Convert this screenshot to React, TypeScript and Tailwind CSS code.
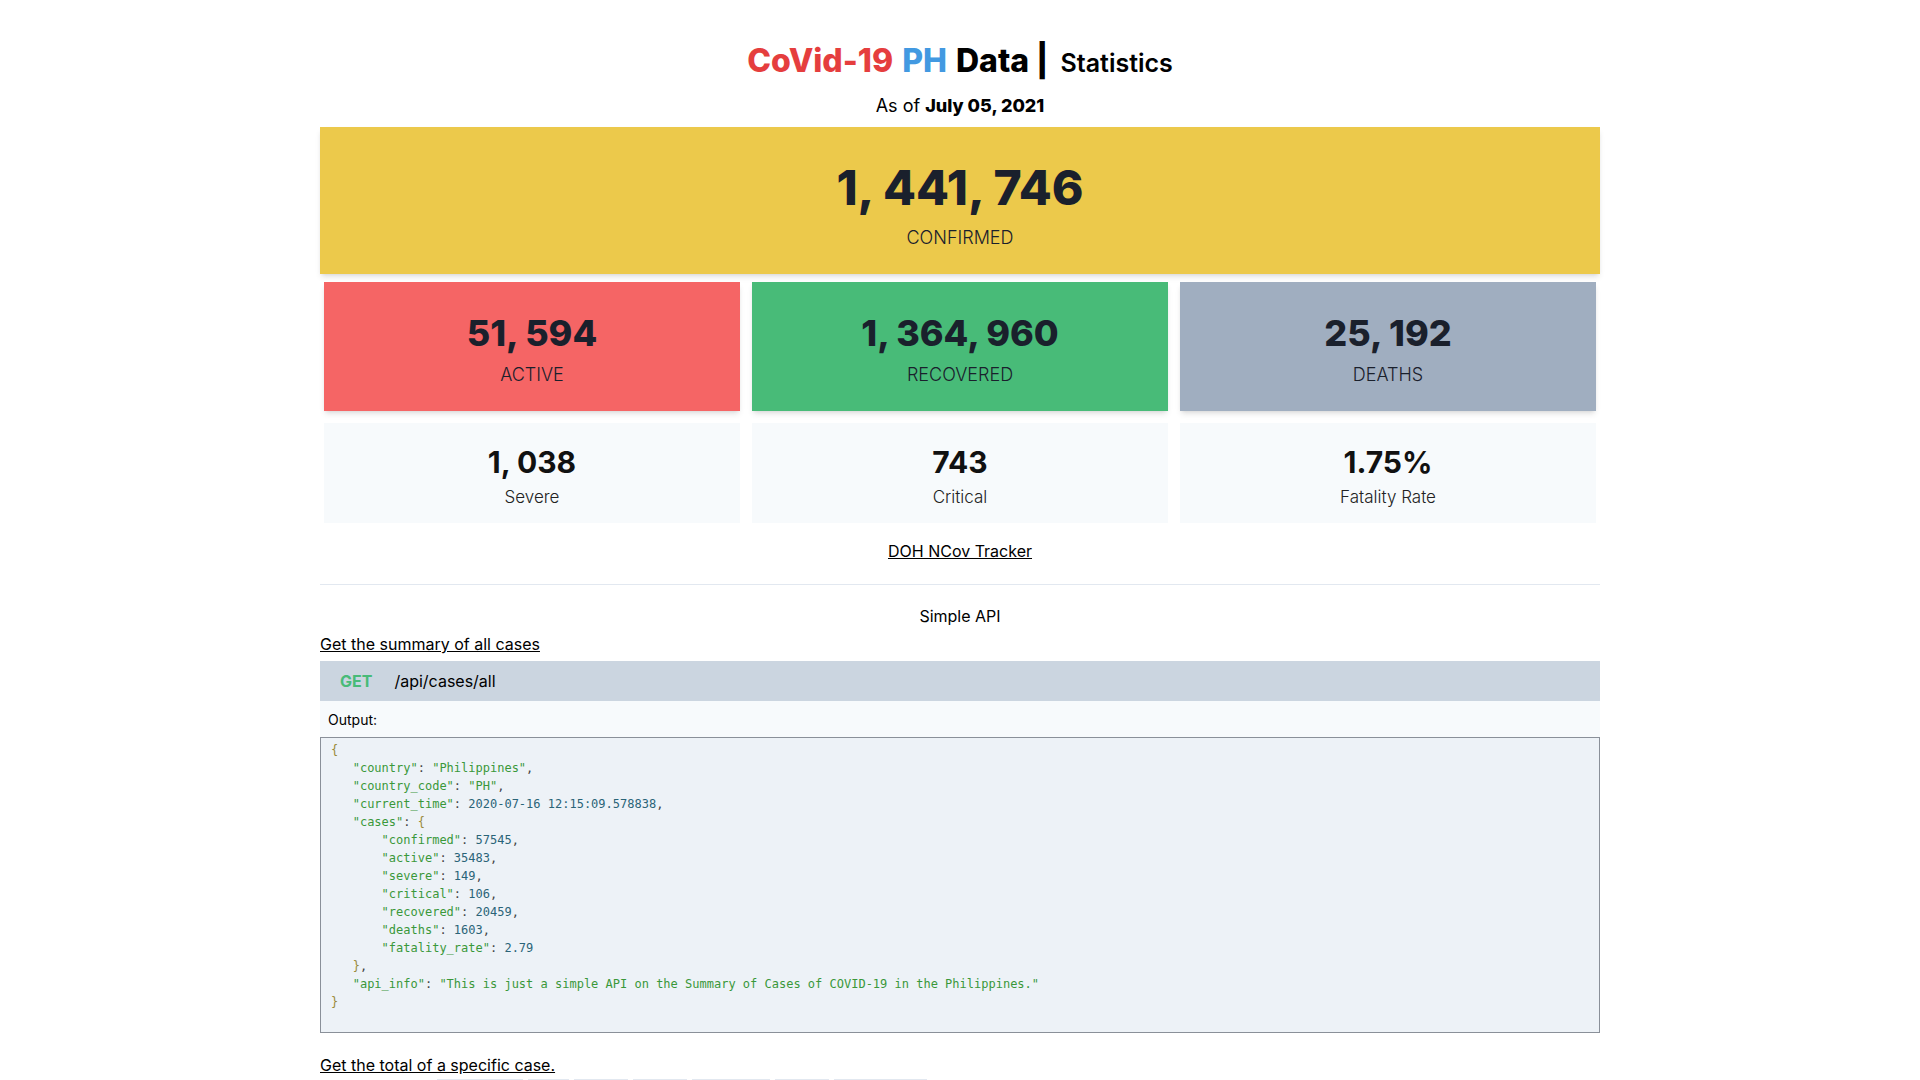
import React from "react";

const K = ({ children }: { children: React.ReactNode }) => (
  <span className="text-[#3a983a]">{children}</span>
);
const N = ({ children }: { children: React.ReactNode }) => (
  <span className="text-[#2a6478]">{children}</span>
);
const B = ({ children }: { children: React.ReactNode }) => (
  <span className="text-[#9a8a3a]">{children}</span>
);
const P = ({ children }: { children: React.ReactNode }) => (
  <span className="text-[#444]">{children}</span>
);

function StatCard({ value, label, bg }: { value: string; label: string; bg: string }) {
  return (
    <div className={`${bg} shadow-md pt-[31px] pb-[22px] text-center text-[#1a202c]`}>
      <div className="text-[36px] leading-[40px] font-extrabold">{value}</div>
      <div className="mt-[8px] text-[18px] leading-[28px] font-light uppercase">{label}</div>
    </div>
  );
}

function SubCard({ value, label }: { value: string; label: string }) {
  return (
    <div className="bg-[#f7fafc] pt-[21px] pb-[12px] text-center text-[#111]">
      <div className="text-[30px] leading-[36px] font-bold">{value}</div>
      <div className="mt-[3px] text-[17px] leading-[28px] font-light text-[#222]">{label}</div>
    </div>
  );
}

export default function App() {
  return (
    <div className="min-h-screen bg-white font-['Inter','Liberation_Sans',sans-serif] text-[#1a202c]">
      <div className="w-[1280px] mx-auto pt-[40px]">
        <h1 className="text-center leading-[42px] flex items-baseline justify-center">
          <span className="text-[32px] font-extrabold text-[#e53e3e]">CoVid-19</span>
          <span className="text-[32px] font-extrabold text-[#4299e1] ml-[9px]">PH</span>
          <span className="text-[32px] font-extrabold text-black ml-[9px]">Data |</span>
          <span className="text-[25px] font-semibold text-black ml-[12px]">Statistics</span>
        </h1>
        <p className="mt-[8px] text-center text-[18px] leading-[28px] text-black">
          As of <span className="font-extrabold">July 05, 2021</span>
        </p>

        <div className="mt-[7px] bg-[#ecc94b] shadow-md pt-[37px] pb-[22px] text-center text-[#1a202c]">
          <div className="text-[48px] leading-[48px] font-extrabold">1, 441, 746</div>
          <div className="mt-[12px] text-[18px] leading-[28px] font-light uppercase">Confirmed</div>
        </div>

        <div className="mt-[8px] px-1 grid grid-cols-3 gap-3">
          <StatCard value="51, 594" label="Active" bg="bg-[#f56565]" />
          <StatCard value="1, 364, 960" label="Recovered" bg="bg-[#48bb78]" />
          <StatCard value="25, 192" label="Deaths" bg="bg-[#a0aec0]" />
          <SubCard value="1, 038" label="Severe" />
          <SubCard value="743" label="Critical" />
          <SubCard value="1.75%" label="Fatality Rate" />
        </div>

        <div className="mt-[16px] text-center leading-[24px]">
          <a href="#" className="underline text-black">DOH NCov Tracker</a>
        </div>

        <hr className="mt-[21px] border-0 border-t border-[#e2e8f0]" />

        <p className="mt-[19px] text-center leading-[24px] text-black">Simple API</p>
        <a href="#" className="mt-[4px] block leading-[24px] underline text-black w-max">
          Get the summary of all cases
        </a>

        <div className="mt-[5px] h-[40px] bg-[#cbd5e0] flex items-center pl-[20px] gap-[22px]">
          <span className="font-bold text-[#48bb78]">GET</span>
          <span className="text-black">/api/cases/all</span>
        </div>
        <div className="h-[36px] bg-[#f7fafc] flex items-center pl-2 text-[14px] text-black">Output:</div>
        <pre className="border border-[#8a9099] bg-[#edf2f7] pt-[3px] pb-[21px] px-[10px] font-['DejaVu_Sans_Mono',monospace] text-[12px] leading-[18px]">
          <B>{"{"}</B>
          {"\n   "}<K>"country"</K><P>: </P><K>"Philippines"</K><P>,</P>
          {"\n   "}<K>"country_code"</K><P>: </P><K>"PH"</K><P>,</P>
          {"\n   "}<K>"current_time"</K><P>: </P><N>2020-07-16 12:15:09.578838</N><P>,</P>
          {"\n   "}<K>"cases"</K><P>: </P><B>{"{"}</B>
          {"\n       "}<K>"confirmed"</K><P>: </P><N>57545</N><P>,</P>
          {"\n       "}<K>"active"</K><P>: </P><N>35483</N><P>,</P>
          {"\n       "}<K>"severe"</K><P>: </P><N>149</N><P>,</P>
          {"\n       "}<K>"critical"</K><P>: </P><N>106</N><P>,</P>
          {"\n       "}<K>"recovered"</K><P>: </P><N>20459</N><P>,</P>
          {"\n       "}<K>"deaths"</K><P>: </P><N>1603</N><P>,</P>
          {"\n       "}<K>"fatality_rate"</K><P>: </P><N>2.79</N>
          {"\n   "}<B>{"}"}</B><P>,</P>
          {"\n   "}<K>"api_info"</K><P>: </P><K>"This is just a simple API on the Summary of Cases of COVID-19 in the Philippines."</K>
          {"\n"}<B>{"}"}</B>
        </pre>

        <a href="#" className="mt-[20px] block leading-[24px] underline text-black w-max">
          Get the total of a specific case.
        </a>
        <div className="mt-[2px] pl-[117px] flex gap-[5px] pb-10">
          <span className="w-[86px] h-[24px] bg-[#edf2f7] border-t border-[#e2e8f0]" />
          <span className="w-[41px] h-[24px] bg-[#edf2f7] border-t border-[#e2e8f0]" />
          <span className="w-[54px] h-[24px] bg-[#edf2f7] border-t border-[#e2e8f0]" />
          <span className="w-[54px] h-[24px] bg-[#edf2f7] border-t border-[#e2e8f0]" />
          <span className="w-[78px] h-[24px] bg-[#edf2f7] border-t border-[#e2e8f0]" />
          <span className="w-[54px] h-[24px] bg-[#edf2f7] border-t border-[#e2e8f0]" />
          <span className="w-[93px] h-[24px] bg-[#edf2f7] border-t border-[#e2e8f0]" />
        </div>
      </div>
    </div>
  );
}
